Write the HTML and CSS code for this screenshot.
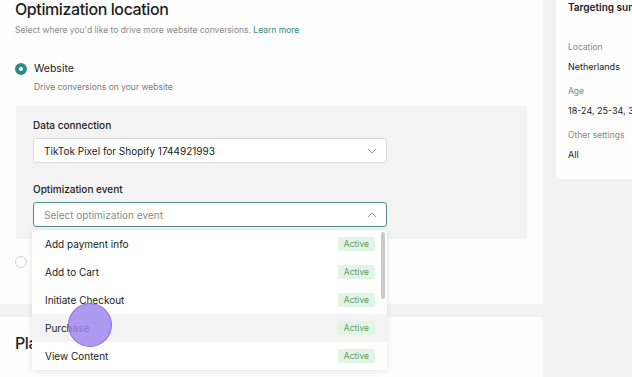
FILE: index.html
```html
<!DOCTYPE html>
<html lang="en">
<head>
    <meta charset="UTF-8">
    <title>Optimization location</title>
    <link rel="stylesheet" href="styles.css">
</head>
<body>
    <div class="page">
        <div class="main">
            <section class="card location">
                <h2 class="card-title">Optimization location</h2>
                <p class="sub">Select where you'd like to drive more website conversions. <a href="#">Learn more</a></p>

                <div class="option">
                    <span class="radio checked"></span>
                    <div>
                        <div class="opt-title">Website</div>
                        <div class="opt-desc">Drive conversions on your website</div>
                    </div>
                </div>

                <div class="settings-box">
                    <div class="field-label">Data connection</div>
                    <div class="select">
                        <span>TikTok Pixel for Shopify 1744921993</span>
                        <svg width="10" height="6" viewBox="0 0 10 6"><path d="M1 1l4 4 4-4" fill="none" stroke="#9a9a9a" stroke-width="1"/></svg>
                    </div>
                    <div class="field-label">Optimization event</div>
                    <div class="select-wrap">
                        <div class="select open">
                            <span class="placeholder">Select optimization event</span>
                            <svg width="10" height="6" viewBox="0 0 10 6"><path d="M1 5l4-4 4 4" fill="none" stroke="#9a9a9a" stroke-width="1"/></svg>
                        </div>
                        <div class="menu">
                            <div class="menu-item"><span>Add payment info</span><span class="badge">Active</span></div>
                            <div class="menu-item"><span>Add to Cart</span><span class="badge">Active</span></div>
                            <div class="menu-item"><span>Initiate Checkout</span><span class="badge">Active</span></div>
                            <div class="menu-item hover"><span>Purchase</span><span class="badge">Active</span></div>
                            <div class="menu-item"><span>View Content</span><span class="badge">Active</span></div>
                            <div class="scrollbar"></div>
                            <div class="cursor"></div>
                        </div>
                    </div>
                </div>

                <div class="option second">
                    <span class="radio"></span>
                    <div class="opt-title">App</div>
                </div>
            </section>

            <section class="card placements">
                <h2 class="card-title">Placements</h2>
            </section>
        </div>

        <aside class="summary">
            <div class="summary-title">Targeting summary</div>
            <div class="sum-label">Location</div>
            <div class="sum-value">Netherlands</div>
            <div class="sum-label">Age</div>
            <div class="sum-value">18-24, 25-34, 35-44</div>
            <div class="sum-label">Other settings</div>
            <div class="sum-value">All</div>
        </aside>
    </div>
</body>
</html>
```

FILE: styles.css
```css
body {
    margin: 0;
    font-family: Inter, "Noto Sans", sans-serif;
    background-color: #f2f2f2;
    color: #222;
    overflow: hidden;
}
.page {
    display: flex;
    gap: 13px;
    align-items: flex-start;
}
.main {
    width: 543px;
    flex-shrink: 0;
    display: flex;
    flex-direction: column;
    gap: 13px;
}
.card {
    background-color: #fdfdfd;
    padding: 0 16px 0 15px;
}
.location {
    height: 304px;
    box-sizing: border-box;
}
.card-title {
    margin: -3px 0 0;
    font-size: 16px;
    line-height: 24px;
    letter-spacing: -0.4px;
    font-weight: 500;
    color: #1f1f1f;
}
.sub {
    margin: 2px 0 0;
    font-size: 8.5px;
    line-height: 14px;
    color: #8a8a8a;
}
.sub a {
    color: #2b8a85;
    text-decoration: none;
}
.option {
    display: flex;
    gap: 7px;
    margin-top: 25px;
}
.radio {
    width: 12px;
    height: 12px;
    border-radius: 50%;
    border: 1px solid #cfcfcf;
    box-sizing: border-box;
    background: #fff;
    flex-shrink: 0;
    margin-top: 1px;
}
.radio.checked {
    border: 4px solid #2e8a84;
    background: #fff;
}
.opt-title {
    font-size: 10.5px;
    line-height: 14px;
    color: #222;
}
.opt-desc {
    margin-top: 5px;
    font-size: 8.5px;
    line-height: 12px;
    color: #7c7c7c;
}
.settings-box {
    margin: 13px 0 0 1px;
    background-color: #f3f3f3;
    padding: 12px 140px 11px 17px;
    height: 133px;
    box-sizing: border-box;
}
.field-label {
    font-size: 10px;
    line-height: 14px;
    font-weight: 500;
    color: #222;
}
.select {
    margin-top: 6px;
    height: 25px;
    box-sizing: border-box;
    border: 1px solid #dadada;
    border-radius: 3px;
    background: #fff;
    display: flex;
    align-items: center;
    justify-content: space-between;
    padding: 0 9px 0 10px;
    font-size: 10px;
    color: #222;
    margin-bottom: 19px;
}
.select.open {
    border-color: #4f8f8a;
    margin-bottom: 0;
}
.placeholder {
    color: #8c8c8c;
}
.select-wrap {
    position: relative;
}
.menu {
    position: absolute;
    top: 28px;
    left: -1px;
    width: 355px;
    background: #fff;
    box-shadow: 0 1px 6px rgba(0, 0, 0, 0.1);
    z-index: 2;
}
.menu-item {
    height: 28px;
    display: flex;
    align-items: center;
    justify-content: space-between;
    padding: 0 12px 0 13px;
    font-size: 10px;
    color: #222;
}
.menu-item.hover {
    background-color: #f3f3f3;
}
.badge {
    background-color: #e2f5e4;
    color: #5a9a68;
    font-size: 8.5px;
    line-height: 14px;
    padding: 0 6px;
    border-radius: 2px;
}
.scrollbar {
    position: absolute;
    top: 2px;
    right: 2px;
    width: 4px;
    height: 67px;
    border-radius: 2px;
    background-color: #cacaca;
}
.cursor {
    position: absolute;
    left: 36px;
    top: 73px;
    width: 42px;
    height: 42px;
    border-radius: 50%;
    background-color: rgba(160, 132, 238, 0.82);
    border: 1.5px solid rgba(140, 105, 230, 0.9);
}
.option.second {
    margin-top: 16px;
}
.placements {
    height: 80px;
    padding-top: 14px;
}
.placements .card-title {
    margin: 0;
}
.summary {
    width: 120px;
    flex-shrink: 0;
    background-color: #fdfdfd;
    padding: 0 12px 14px;
    margin-top: -10px;
    height: 189px;
    box-sizing: border-box;
    white-space: nowrap;
}
.summary-title {
    margin-top: 11px;
    font-size: 10px;
    font-weight: 600;
    color: #222;
}
.summary-title + .sum-label {
    margin-top: 28px;
}
.sum-label {
    font-size: 8.5px;
    line-height: 12px;
    color: #888;
    margin-top: 12px;
}
.sum-value {
    font-size: 9px;
    line-height: 12px;
    color: #222;
    margin-top: 8px;
}
```
